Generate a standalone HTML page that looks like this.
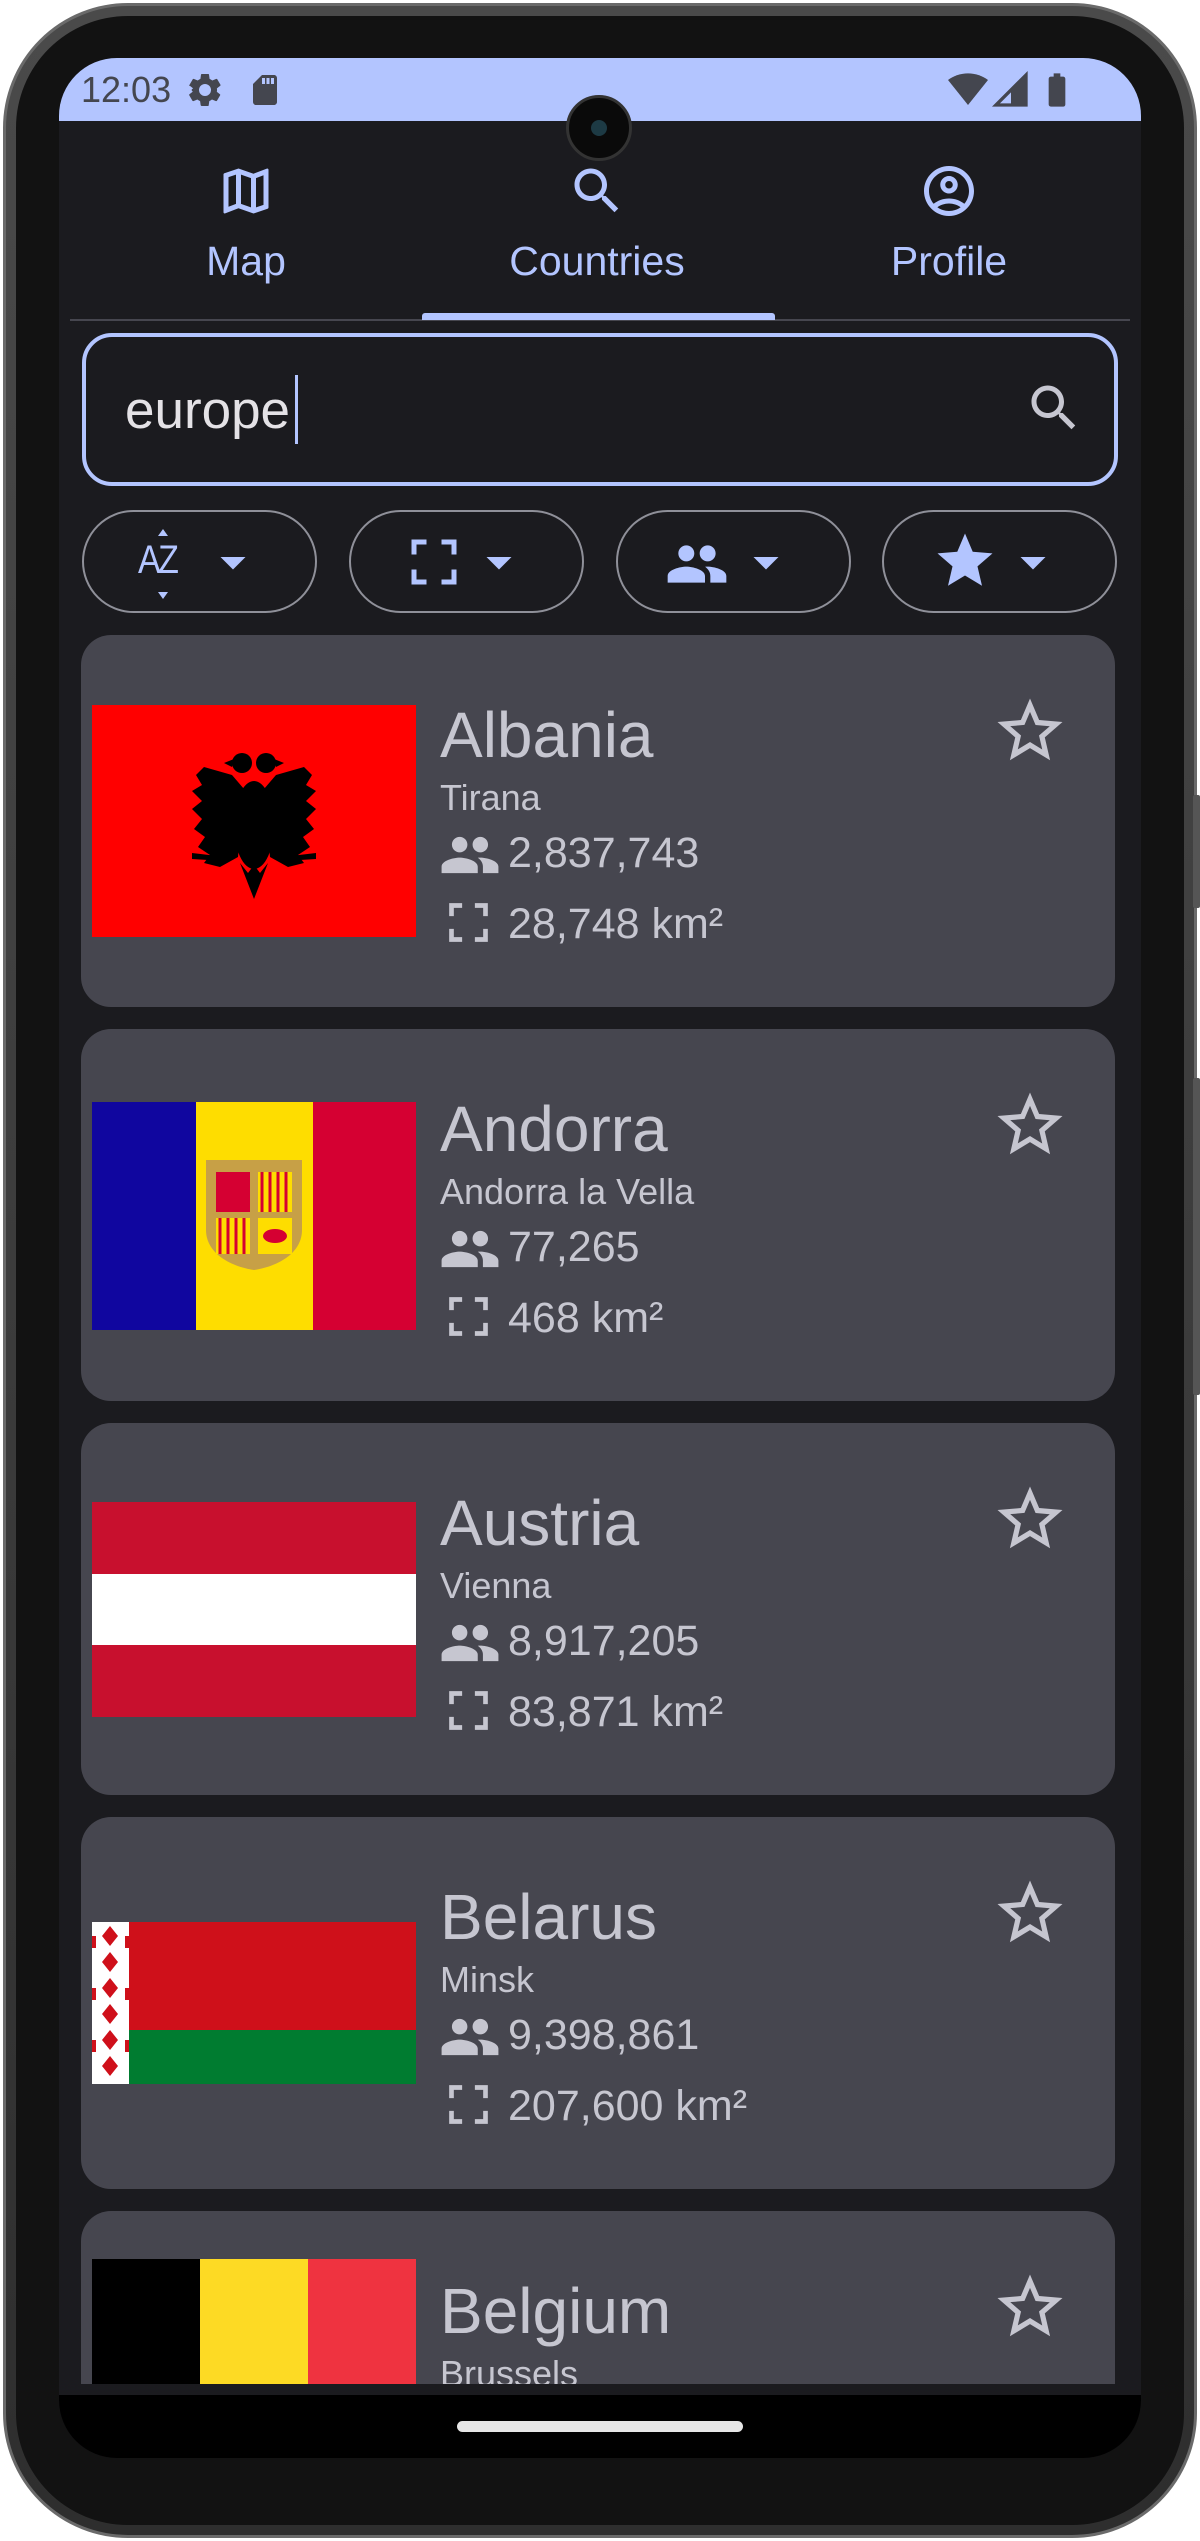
<!DOCTYPE html>
<html><head><meta charset="utf-8">
<style>
*{margin:0;padding:0;box-sizing:border-box}
body{width:1200px;height:2541px;background:#fff;position:relative;overflow:hidden;font-family:"Liberation Sans",Arial,sans-serif}
.abs{position:absolute}
.frame{left:3px;top:3px;width:1194px;height:2535px;border-radius:125px;background:linear-gradient(#4a4a4a,#2e2e2e);border:3px solid #6a6a6a}
.bezel{left:16px;top:16px;width:1168px;height:2509px;border-radius:112px;background:#121212}
.screen{left:59px;top:58px;width:1082px;height:2400px;border-radius:58px;background:#1b1b1f;overflow:hidden}
.status{left:0;top:0;width:1082px;height:63px;background:#b3c5ff}
.tab{color:#b3c5ff;font-size:41px;line-height:1}
.card{left:22px;width:1034px;height:372px;border-radius:30px;background:#46464f;overflow:hidden}
.card .name{position:absolute;left:359px;top:68px;font-size:64px;line-height:1;color:#c6c6d0}
.card .cap{position:absolute;left:359px;top:145px;font-size:36px;line-height:1;color:#c6c6d0}
.card .pop{position:absolute;left:427px;top:197px;font-size:43px;line-height:1;color:#c6c6d0}
.card .area{position:absolute;left:427px;top:268px;font-size:43px;line-height:1;color:#c6c6d0}
.card svg{position:absolute}
.chip{top:452px;height:103px;width:235px;border:2.5px solid #8f9099;border-radius:52px}
</style></head><body>
<div class="abs frame"></div>
<div class="abs" style="left:1193px;top:795px;width:7px;height:113px;background:#555;border-radius:2px"></div>
<div class="abs" style="left:1193px;top:1078px;width:7px;height:317px;background:#555;border-radius:2px"></div>
<div class="abs bezel"></div>
<div class="abs screen">
  <div class="abs status">
    <div class="abs" style="left:22px;top:14px;font-size:36px;line-height:1;color:#44464f">12:03</div>
    <svg class="abs" style="left:126px;top:12px" width="40" height="40" viewBox="0 0 24 24"><path fill="#44464f" d="M19.14 12.94c.04-.3.06-.61.06-.94 0-.32-.02-.64-.07-.94l2.03-1.58a.49.49 0 0 0 .12-.61l-1.92-3.32a.49.49 0 0 0-.59-.22l-2.39.96c-.5-.38-1.03-.7-1.62-.94l-.36-2.54a.48.48 0 0 0-.48-.41h-3.84c-.24 0-.43.17-.47.41l-.36 2.54c-.59.24-1.130.57-1.62.94l-2.39-.96a.49.49 0 0 0-.59.22L2.74 8.87c-.12.21-.8.47.12.61l2.03 1.58c-.5.3-.9.63-.9.94s.2.64.7.94l-2.03 1.58a.49.49 0 0 0-.12.61l1.92 3.32c.12.22.37.29.59.22l2.39-.96c.5.38 1.03.7 1.62.94l.36 2.54c.5.24.24.41.48.41h3.84c.24 0 .44-.17.47-.41l.36-2.54c.59-.24 1.13-.56 1.62-.94l2.39.96c.22.08.47 0 .59-.22l1.92-3.32c.12-.22.07-.47-.12-.61l-2.01-1.58zM12 15.6A3.6 3.6 0 1 1 12 8.4a3.6 3.6 0 0 1 0 7.2z"/></svg>
    <svg class="abs" style="left:188px;top:12px" width="36" height="40" viewBox="0 0 24 24"><path fill="#44464f" d="M18 2h-8L4 8v12c0 1.1.9 2 2 2h12c1.1 0 2-.9 2-2V4c0-1.1-.9-2-2-2zm-6 6h-2V4h2v4zm3 0h-2V4h2v4zm3 0h-2V4h2v4z"/></svg>
    <svg class="abs" style="left:888px;top:12px" width="42" height="40" viewBox="0 0 24 24"><path fill="#44464f" d="M12 21L0 6c3.3-2.5 7.5-4 12-4s8.7 1.5 12 4L12 21z"/></svg>
    <svg class="abs" style="left:932px;top:12px" width="40" height="40" viewBox="0 0 24 24"><path fill="none" stroke="#44464f" stroke-width="2" d="M21 3L3 21h18z"/><path fill="#44464f" d="M21 3L12 12v9h9z"/></svg>
    <svg class="abs" style="left:978px;top:10px" width="40" height="44" viewBox="0 0 24 24"><path fill="#44464f" d="M15.67 4H14V2h-4v2H8.33C7.6 4 7 4.6 7 5.33v15.33C7 21.4 7.6 22 8.33 22h7.33c.74 0 1.34-.6 1.34-1.33V5.33C17 4.6 16.4 4 15.67 4z"/></svg>
  </div>
  <div class="abs" style="left:507px;top:37px;width:66px;height:66px;border-radius:50%;background:#0a0a0a;border:3px solid #333"></div>
  <div class="abs" style="left:532px;top:62px;width:16px;height:16px;border-radius:50%;background:#1d3a44"></div>

  <!-- tabs -->
  <svg class="abs" style="left:157px;top:103px" width="60" height="60" viewBox="0 0 24 24"><path fill="#b3c5ff" d="M20.5 3l-.16.03L15 5.1 9 3 3.36 4.9c-.21.07-.36.25-.36.48V20.5c0 .28.22.5.5.5l.16-.03L9 18.9l6 2.1 5.64-1.9c.21-.07.36-.25.36-.48V3.5c0-.28-.22-.5-.5-.5zM10 5.47l4 1.4v11.66l-4-1.4V5.47zm-5 .99l3-1.01v11.7l-3 1.16V6.46zm14 11.08l-3 1.01V6.86l3-1.16v11.84z"/></svg>
  <div class="abs tab" style="left:0;width:374px;top:183px;text-align:center">Map</div>
  <svg class="abs" style="left:508px;top:103px" width="60" height="60" viewBox="0 0 24 24"><path fill="#b3c5ff" d="M15.5 14h-.79l-.28-.27C15.41 12.59 16 11.11 16 9.5 16 5.91 13.09 3 9.5 3S3 5.91 3 9.5 5.91 16 9.5 16c1.61 0 3.09-.59 4.23-1.57l.27.28v.79l5 4.99L20.49 19l-4.99-5zm-6 0C7.01 14 5 11.99 5 9.5S7.01 5 9.5 5 14 7.01 14 9.5 11.99 14 9.5 14z"/></svg>
  <div class="abs tab" style="left:351px;width:374px;top:183px;text-align:center">Countries</div>
  <svg class="abs" style="left:860px;top:103px" width="60" height="60" viewBox="0 0 24 24"><path fill="#b3c5ff" d="M12 2C6.48 2 2 6.48 2 12s4.48 10 10 10 10-4.48 10-10S17.52 2 12 2zM7.35 18.5C8.66 17.56 10.26 17 12 17s3.34.56 4.65 1.5c-1.31.94-2.91 1.5-4.65 1.5s-3.34-.56-4.65-1.5zm10.79-1.38C16.45 15.8 14.32 15 12 15s-4.45.8-6.14 2.12C4.7 15.73 4 13.95 4 12c0-4.42 3.58-8 8-8s8 3.58 8 8c0 1.95-.7 3.73-1.86 5.12zM12 6c-1.93 0-3.5 1.57-3.5 3.5S10.07 13 12 13s3.5-1.57 3.5-3.5S13.93 6 12 6zm0 5c-.83 0-1.5-.67-1.5-1.5S11.17 8 12 8s1.5.67 1.5 1.5S12.83 11 12 11z"/></svg>
  <div class="abs tab" style="left:703px;width:374px;top:183px;text-align:center">Profile</div>
  <div class="abs" style="left:11px;top:261px;width:1060px;height:2px;background:#46464f"></div>
  <div class="abs" style="left:363px;top:255px;width:353px;height:7px;background:#b3c5ff;border-radius:3px 3px 0 0"></div>

  <!-- search -->
  <div class="abs" style="left:23px;top:275px;width:1036px;height:153px;border:4.5px solid #b3c5ff;border-radius:30px"></div>
  <div class="abs" style="left:66px;top:326px;font-size:53px;line-height:1;color:#e4e2e6">europe</div>
  <div class="abs" style="left:236px;top:317px;width:3px;height:69px;background:#b3c5ff"></div>
  <svg class="abs" style="left:965px;top:320px" width="60" height="60" viewBox="0 0 24 24"><path fill="#c6c6d0" d="M15.5 14h-.79l-.28-.27C15.41 12.59 16 11.11 16 9.5 16 5.91 13.09 3 9.5 3S3 5.91 3 9.5 5.91 16 9.5 16c1.61 0 3.09-.59 4.23-1.57l.27.28v.79l5 4.99L20.49 19l-4.99-5zm-6 0C7.01 14 5 11.99 5 9.5S7.01 5 9.5 5 14 7.01 14 9.5 11.99 14 9.5 14z"/></svg>

  <!-- chips -->
  <div class="abs chip" style="left:23px"></div>
  <div class="abs chip" style="left:290px"></div>
  <div class="abs chip" style="left:557px"></div>
  <div class="abs chip" style="left:823px"></div>
  <div class="abs" style="left:79px;top:482px;font-size:40px;line-height:1;color:#b3c5ff;letter-spacing:-3px;transform:scaleX(0.85);transform-origin:left">AZ</div>
  <svg class="abs" style="left:80px;top:460px" width="50" height="90" viewBox="0 0 50 90"><path fill="#b3c5ff" d="M19 18l5-7 5 7zM19 74l5 7 5-7z"/></svg>
  <svg class="abs" style="left:144px;top:474px" width="60" height="60" viewBox="0 0 24 24"><path fill="#b3c5ff" d="M7 10l5 5 5-5z"/></svg>
  <svg class="abs" style="left:345px;top:474px" width="60" height="60" viewBox="0 0 24 24"><path fill="none" stroke="#b3c5ff" stroke-width="2" d="M4 9V4h5M15 4h5v5M20 15v5h-5M9 20H4v-5"/></svg>
  <svg class="abs" style="left:410px;top:474px" width="60" height="60" viewBox="0 0 24 24"><path fill="#b3c5ff" d="M7 10l5 5 5-5z"/></svg>
  <svg class="abs" style="left:606px;top:474px" width="64" height="64" viewBox="0 0 24 24"><path fill="#b3c5ff" d="M16 11c1.66 0 2.99-1.34 2.99-3S17.66 5 16 5c-1.66 0-3 1.34-3 3s1.34 3 3 3zm-8 0c1.66 0 2.99-1.34 2.99-3S9.66 5 8 5C6.34 5 5 6.34 5 8s1.34 3 3 3zm0 2c-2.33 0-7 1.17-7 3.5V19h14v-2.5c0-2.33-4.67-3.5-7-3.5zm8 0c-.29 0-.62.02-.97.05 1.16.84 1.97 1.97 1.97 3.45V19h6v-2.5c0-2.33-4.67-3.5-7-3.5z"/></svg>
  <svg class="abs" style="left:677px;top:474px" width="60" height="60" viewBox="0 0 24 24"><path fill="#b3c5ff" d="M7 10l5 5 5-5z"/></svg>
  <svg class="abs" style="left:873px;top:470px" width="66" height="66" viewBox="0 0 24 24"><path fill="#b3c5ff" d="M12 17.27L18.18 21l-1.64-7.03L22 9.24l-7.19-.61L12 2 9.19 8.63 2 9.24l5.46 4.73L5.82 21z"/></svg>
  <svg class="abs" style="left:944px;top:474px" width="60" height="60" viewBox="0 0 24 24"><path fill="#b3c5ff" d="M7 10l5 5 5-5z"/></svg>

  <!-- cards -->
  <div class="abs" style="left:0;top:0;width:1082px;height:2326px;overflow:hidden">

  <div class="abs card" style="top:577px">
    <svg style="left:11px;top:70px" width="324" height="232" viewBox="0 0 324 232">
      <rect width="324" height="232" fill="#ff0000"/>
      <g fill="#000">
        <ellipse cx="162" cy="120" rx="20" ry="44"/>
        <path d="M152 84L140 70 112 62 104 70 110 80 100 86 110 96 100 104 110 114 102 124 113 132 106 142 118 150 112 158 128 162 146 152z"/>
        <path d="M172 84L184 70 212 62 220 70 214 80 224 86 214 96 224 104 214 114 222 124 211 132 218 142 206 150 212 158 196 162 178 152z"/>
        <circle cx="150" cy="58" r="10"/><circle cx="174" cy="58" r="10"/>
        <path d="M142 54l-10 4 8 4zM182 54l10 4-8 4z"/>
        <path d="M148 158L162 194 176 158 168 168 162 160 156 168z"/>
        <path d="M100 148l34 4-2 4-32-2zM224 148l-34 4 2 4 32-2z"/>
      </g>
    </svg>
    <div class="name">Albania</div><div class="cap">Tirana</div>
    <svg style="left:358px;top:189px" width="62" height="62" viewBox="0 0 24 24"><path fill="#c6c6d0" d="M16 11c1.66 0 2.99-1.34 2.99-3S17.66 5 16 5c-1.66 0-3 1.34-3 3s1.34 3 3 3zm-8 0c1.66 0 2.99-1.34 2.99-3S9.66 5 8 5C6.34 5 5 6.34 5 8s1.34 3 3 3zm0 2c-2.33 0-7 1.17-7 3.5V19h14v-2.5c0-2.33-4.67-3.5-7-3.5zm8 0c-.29 0-.62.02-.97.05 1.16.84 1.97 1.97 1.97 3.45V19h6v-2.5c0-2.33-4.67-3.5-7-3.5z"/></svg>
    <div class="pop">2,837,743</div>
    <svg style="left:362px;top:262px" width="51" height="51" viewBox="0 0 24 24"><path fill="none" stroke="#c6c6d0" stroke-width="2.2" d="M4 9V4h5M15 4h5v5M20 15v5h-5M9 20H4v-5"/></svg>
    <div class="area">28,748 km²</div>
    <svg style="left:910px;top:57px" width="78" height="78" viewBox="0 0 24 24"><path fill="#c6c6d0" d="M22 9.24l-7.19-.62L12 2 9.19 8.63 2 9.24l5.46 4.73L5.82 21 12 17.27 18.18 21l-1.63-7.03L22 9.24zM12 15.4l-3.76 2.27 1-4.28-3.32-2.88 4.38-.38L12 6.1l1.71 4.04 4.38.38-3.32 2.88 1 4.28L12 15.4z"/></svg>
  </div>

  <div class="abs card" style="top:971px">
    <svg style="left:11px;top:73px" width="324" height="228" viewBox="0 0 324 228">
      <rect width="104" height="228" fill="#10069f"/>
      <rect x="104" width="117" height="228" fill="#fedd00"/>
      <rect x="221" width="103" height="228" fill="#d50032"/>
      <path d="M114 58h96v70c0 22-22 36-48 40-26-4-48-18-48-40z" fill="#c7a046"/>
      <rect x="124" y="70" width="34" height="40" fill="#d50032"/>
      <rect x="166" y="70" width="34" height="40" fill="#fedd00"/>
      <path d="M170 70v40M178 70v40M186 70v40M194 70v40" stroke="#d50032" stroke-width="3"/>
      <rect x="124" y="116" width="34" height="36" fill="#fedd00"/>
      <path d="M128 116v36M136 116v36M144 116v36M152 116v36" stroke="#d50032" stroke-width="3"/>
      <rect x="166" y="116" width="34" height="36" fill="#fedd00"/>
      <ellipse cx="183" cy="134" rx="12" ry="7" fill="#d50032"/>
    </svg>
    <div class="name">Andorra</div><div class="cap">Andorra la Vella</div>
    <svg style="left:358px;top:189px" width="62" height="62" viewBox="0 0 24 24"><path fill="#c6c6d0" d="M16 11c1.66 0 2.99-1.34 2.99-3S17.66 5 16 5c-1.66 0-3 1.34-3 3s1.34 3 3 3zm-8 0c1.66 0 2.99-1.34 2.99-3S9.66 5 8 5C6.34 5 5 6.34 5 8s1.34 3 3 3zm0 2c-2.33 0-7 1.17-7 3.5V19h14v-2.5c0-2.33-4.67-3.5-7-3.5zm8 0c-.29 0-.62.02-.97.05 1.16.84 1.97 1.97 1.97 3.45V19h6v-2.5c0-2.33-4.67-3.5-7-3.5z"/></svg>
    <div class="pop">77,265</div>
    <svg style="left:362px;top:262px" width="51" height="51" viewBox="0 0 24 24"><path fill="none" stroke="#c6c6d0" stroke-width="2.2" d="M4 9V4h5M15 4h5v5M20 15v5h-5M9 20H4v-5"/></svg>
    <div class="area">468 km²</div>
    <svg style="left:910px;top:57px" width="78" height="78" viewBox="0 0 24 24"><path fill="#c6c6d0" d="M22 9.24l-7.19-.62L12 2 9.19 8.63 2 9.24l5.46 4.73L5.82 21 12 17.27 18.18 21l-1.63-7.03L22 9.24zM12 15.4l-3.76 2.27 1-4.28-3.32-2.88 4.38-.38L12 6.1l1.71 4.04 4.38.38-3.32 2.88 1 4.28L12 15.4z"/></svg>
  </div>

  <div class="abs card" style="top:1365px">
    <svg style="left:11px;top:79px" width="324" height="215" viewBox="0 0 324 215">
      <rect width="324" height="215" fill="#c8102e"/>
      <rect y="72" width="324" height="71" fill="#fff"/>
    </svg>
    <div class="name">Austria</div><div class="cap">Vienna</div>
    <svg style="left:358px;top:189px" width="62" height="62" viewBox="0 0 24 24"><path fill="#c6c6d0" d="M16 11c1.66 0 2.99-1.34 2.99-3S17.66 5 16 5c-1.66 0-3 1.34-3 3s1.34 3 3 3zm-8 0c1.66 0 2.99-1.34 2.99-3S9.66 5 8 5C6.34 5 5 6.34 5 8s1.34 3 3 3zm0 2c-2.33 0-7 1.17-7 3.5V19h14v-2.5c0-2.33-4.67-3.5-7-3.5zm8 0c-.29 0-.62.02-.97.05 1.16.84 1.97 1.97 1.97 3.45V19h6v-2.5c0-2.33-4.67-3.5-7-3.5z"/></svg>
    <div class="pop">8,917,205</div>
    <svg style="left:362px;top:262px" width="51" height="51" viewBox="0 0 24 24"><path fill="none" stroke="#c6c6d0" stroke-width="2.2" d="M4 9V4h5M15 4h5v5M20 15v5h-5M9 20H4v-5"/></svg>
    <div class="area">83,871 km²</div>
    <svg style="left:910px;top:57px" width="78" height="78" viewBox="0 0 24 24"><path fill="#c6c6d0" d="M22 9.24l-7.19-.62L12 2 9.19 8.63 2 9.24l5.46 4.73L5.82 21 12 17.27 18.18 21l-1.63-7.03L22 9.24zM12 15.4l-3.76 2.27 1-4.28-3.32-2.88 4.38-.38L12 6.1l1.71 4.04 4.38.38-3.32 2.88 1 4.28L12 15.4z"/></svg>
  </div>

  <div class="abs card" style="top:1759px">
    <svg style="left:11px;top:105px" width="324" height="162" viewBox="0 0 324 162">
      <rect width="324" height="108" fill="#cf101a"/>
      <rect y="108" width="324" height="54" fill="#007c30"/>
      <rect width="37" height="162" fill="#fff"/>
      <g fill="#cf101a">
        <path d="M18 4l8 10-8 10-8-10zM18 30l8 10-8 10-8-10zM18 56l8 10-8 10-8-10zM18 82l8 10-8 10-8-10zM18 108l8 10-8 10-8-10zM18 134l8 10-8 10-8-10z"/>
        <path d="M0 14h4v12H0zM33 14h4v12h-4zM0 66h4v12H0zM33 66h4v12h-4zM0 118h4v12H0zM33 118h4v12h-4z"/>
      </g>
    </svg>
    <div class="name">Belarus</div><div class="cap">Minsk</div>
    <svg style="left:358px;top:189px" width="62" height="62" viewBox="0 0 24 24"><path fill="#c6c6d0" d="M16 11c1.66 0 2.99-1.34 2.99-3S17.66 5 16 5c-1.66 0-3 1.34-3 3s1.34 3 3 3zm-8 0c1.66 0 2.99-1.34 2.99-3S9.66 5 8 5C6.34 5 5 6.34 5 8s1.34 3 3 3zm0 2c-2.33 0-7 1.17-7 3.5V19h14v-2.5c0-2.33-4.67-3.5-7-3.5zm8 0c-.29 0-.62.02-.97.05 1.16.84 1.97 1.97 1.97 3.45V19h6v-2.5c0-2.33-4.67-3.5-7-3.5z"/></svg>
    <div class="pop">9,398,861</div>
    <svg style="left:362px;top:262px" width="51" height="51" viewBox="0 0 24 24"><path fill="none" stroke="#c6c6d0" stroke-width="2.2" d="M4 9V4h5M15 4h5v5M20 15v5h-5M9 20H4v-5"/></svg>
    <div class="area">207,600 km²</div>
    <svg style="left:910px;top:57px" width="78" height="78" viewBox="0 0 24 24"><path fill="#c6c6d0" d="M22 9.24l-7.19-.62L12 2 9.19 8.63 2 9.24l5.46 4.73L5.82 21 12 17.27 18.18 21l-1.63-7.03L22 9.24zM12 15.4l-3.76 2.27 1-4.28-3.32-2.88 4.38-.38L12 6.1l1.71 4.04 4.38.38-3.32 2.88 1 4.28L12 15.4z"/></svg>
  </div>

  <div class="abs card" style="top:2153px">
    <svg style="left:11px;top:48px" width="324" height="232" viewBox="0 0 324 232">
      <rect width="108" height="232" fill="#000"/>
      <rect x="108" width="108" height="232" fill="#fdda24"/>
      <rect x="216" width="108" height="232" fill="#ef3340"/>
    </svg>
    <div class="name" style="top:68px">Belgium</div><div class="cap" style="top:145px">Brussels</div>
    <svg style="left:910px;top:57px" width="78" height="78" viewBox="0 0 24 24"><path fill="#c6c6d0" d="M22 9.24l-7.19-.62L12 2 9.19 8.63 2 9.24l5.46 4.73L5.82 21 12 17.27 18.18 21l-1.63-7.03L22 9.24zM12 15.4l-3.76 2.27 1-4.28-3.32-2.88 4.38-.38L12 6.1l1.71 4.04 4.38.38-3.32 2.88 1 4.28L12 15.4z"/></svg>
  </div>
  </div>

  <!-- nav bar -->
  <div class="abs" style="left:0;top:2337px;width:1082px;height:63px;background:#000"></div>
  <div class="abs" style="left:398px;top:2363px;width:286px;height:11px;border-radius:6px;background:#e6e6e6"></div>
</div>
</body></html>
